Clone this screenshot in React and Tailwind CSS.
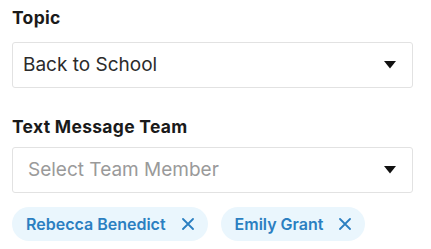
import React from "react";

function Caret() {
  return (
    <svg width="12" height="8" viewBox="0 0 12 8" className="shrink-0">
      <path d="M0 0 H12 L6 7.5 Z" fill="#111" />
    </svg>
  );
}

function XIcon() {
  return (
    <svg width="12" height="12" viewBox="0 0 12 12" className="shrink-0">
      <path d="M1 1 L11 11 M11 1 L1 11" stroke="#2b7fc1" strokeWidth="1.8" strokeLinecap="round" />
    </svg>
  );
}

function Chip({ label }) {
  return (
    <div className="flex items-center h-[34px] rounded-full bg-[#eaf6fd] pl-[14px] pr-[14px] gap-[16px]">
      <span className="text-[16px] font-semibold text-[#2b7fc1] leading-none">{label}</span>
      <XIcon />
    </div>
  );
}

export default function App() {
  return (
    <div className="w-[431px] h-[249px] bg-white px-3 pt-[8px]" style={{ fontFamily: "Inter, 'Open Sans', sans-serif" }}>
      <div className="text-[17.5px] font-bold text-[#1a1a1a] leading-[20px] tracking-[0.3px]">Topic</div>
      <div className="mt-[14px] h-[46px] w-[401px] border border-[#e2e2e2] rounded-[3px] flex items-center justify-between pl-[10px] pr-[16px]">
        <span className="text-[19px] text-[#2b2b2b]">Back to School</span>
        <Caret />
      </div>
      <div className="mt-[29px] text-[17.5px] font-bold text-[#1a1a1a] leading-[20px] tracking-[0.3px]">Text Message Team</div>
      <div className="mt-[10px] h-[46px] w-[401px] border border-[#e2e2e2] rounded-[3px] flex items-center justify-between pl-[15px] pr-[16px]">
        <span className="text-[19px] text-[#9a9a9a]">Select Team Member</span>
        <Caret />
      </div>
      <div className="mt-[14px] flex gap-[13px]">
        <Chip label="Rebecca Benedict" />
        <Chip label="Emily Grant" />
      </div>
    </div>
  );
}
